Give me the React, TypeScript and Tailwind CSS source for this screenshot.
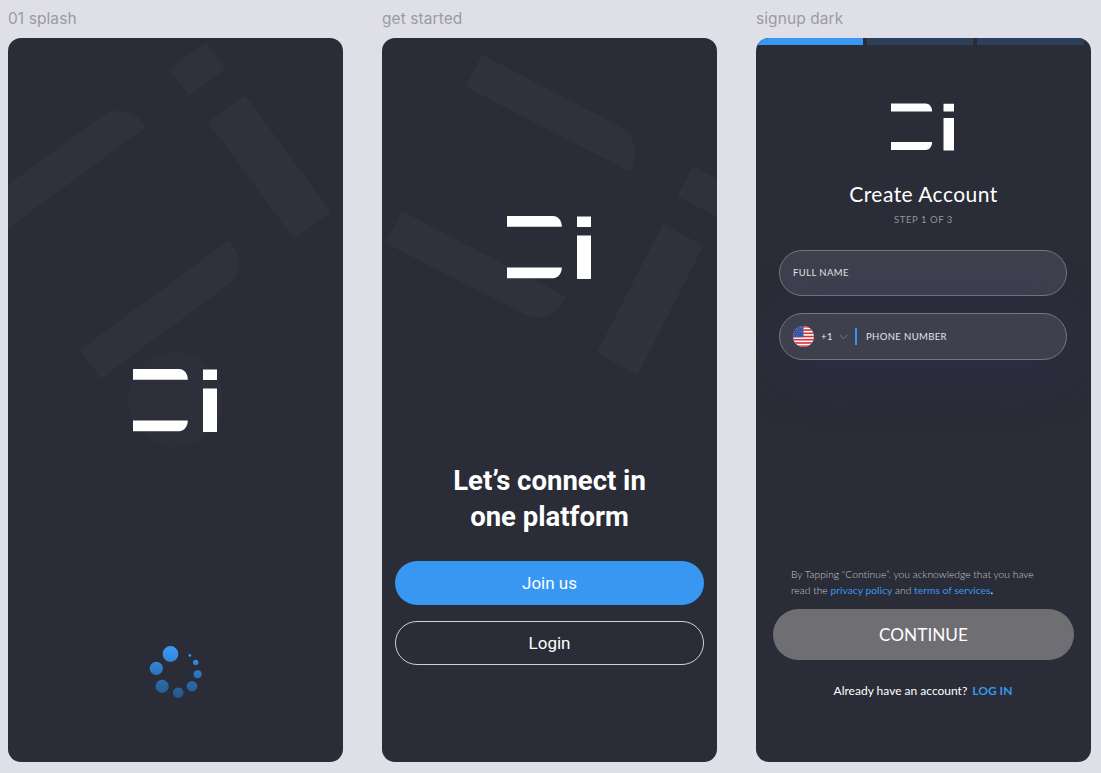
import type { ReactNode } from "react";

function Logo({ className }: { className: string }) {
  return (
    <svg viewBox="0 0 84 63" fill="#fff" className={className} aria-hidden="true">
      <path d="M0 0H46C51 0 54.8 4.5 54.8 10.7H0Z" />
      <path d="M0 51.5H54.8C54.8 57.5 51 62.2 46 62.2H0Z" />
      <path d="M70 .5H84V10.9H70ZM70 19.5H84V62.9H70Z" />
    </svg>
  );
}

function Frame({ title, children }: { title: string; children: ReactNode }) {
  return (
    <section className="flex w-[335px] flex-col">
      <h2 className="h-[38px] pt-[9px] font-['Inter'] text-[15.5px] leading-5 tracking-[0.08px] text-[#9b9b9f]">
        {title}
      </h2>
      <div className="relative flex h-[724px] flex-col items-center overflow-hidden rounded-[13px] bg-[#2a2c37]">
        {children}
      </div>
    </section>
  );
}

function SplashBackdrop() {
  return (
    <svg viewBox="8 38 335 724" className="absolute inset-0 h-full w-full" fill="#2f313c" aria-hidden="true">
      <path d="M206 42L225.7 68.5 189.3 95.7 169 69Z" />
      <path d="M245 95L331 212 294 239 208 122Z" />
      <path d="M8 184.5L101 117C116 106 135 110 146 127L8 228.5Z" />
      <path d="M229 240C243 256 242 274 227 285.5L101 378.7 80 350Z" />
      <circle cx="175.5" cy="399.5" r="47.5" fill="#2d2f3a" />
    </svg>
  );
}

function StartBackdrop() {
  return (
    <svg viewBox="382 38 335 724" className="absolute inset-0 h-full w-full" fill="#2f313c" aria-hidden="true">
      <path d="M482 54.5L622 127.5C636 135 639 156 630.5 172L465.5 87Z" />
      <path d="M692.7 166L717 178.5V216.5L677.5 196.5Z" />
      <path d="M402 211L566 296.5C558 315 541 322 525 314.5L385 243Z" />
      <path d="M663 224L703.5 245.5 637.5 375 596.5 353Z" />
    </svg>
  );
}

function Spinner() {
  return (
    <svg viewBox="149 645 54 54" className="mt-[213px] h-[54px] w-[54px]" aria-hidden="true">
      <defs>
        <linearGradient id="spin" gradientUnits="userSpaceOnUse" x1="0" y1="646" x2="0" y2="698">
          <stop offset="0" stopColor="#3a9af8" />
          <stop offset="1" stopColor="#22568a" />
        </linearGradient>
      </defs>
      <g fill="url(#spin)">
        <circle cx="170.5" cy="654" r="7.9" />
        <circle cx="156.3" cy="668.3" r="6.6" />
        <circle cx="162.1" cy="686.3" r="6.6" />
        <circle cx="178.2" cy="692.7" r="5.3" />
        <circle cx="192" cy="686.3" r="5.3" />
        <circle cx="197.6" cy="674.2" r="4" />
        <circle cx="195.7" cy="662.4" r="2.7" />
        <circle cx="189.9" cy="655.4" r="1.4" />
      </g>
    </svg>
  );
}

function Flag() {
  const stripes = [0, 1, 2, 3, 4, 5, 6];
  const rows = [0, 1, 2, 3, 4];
  return (
    <svg viewBox="0 0 21 21" className="h-[21px] w-[21px]" aria-hidden="true">
      <clipPath id="flag">
        <circle cx="10.5" cy="10.5" r="10.5" />
      </clipPath>
      <g clipPath="url(#flag)">
        <rect width="21" height="21" fill="#fff" />
        {stripes.map((i) => (
          <rect key={i} y={i * 3.23} width="21" height="1.62" fill="#dc3038" />
        ))}
        <rect width="10.5" height="11.3" fill="#3550a0" />
        {rows.map((r) =>
          rows.map((c) => (
            <circle key={`${r}-${c}`} cx={1.2 + c * 2.1 + (r % 2) * 0.9} cy={1.2 + r * 2.2} r=".4" fill="#a9b5da" />
          )),
        )}
      </g>
    </svg>
  );
}

export default function App() {
  return (
    <main className="flex h-[773px] w-[1101px] gap-[39px] overflow-hidden bg-[#dfdfe8] pl-2">
      <Frame title="01 splash">
        <SplashBackdrop />
        <div className="relative flex flex-col items-center pt-[331px]">
          <Logo className="mr-px h-[63px] w-[84px]" />
          <Spinner />
        </div>
      </Frame>

      <Frame title="get started">
        <StartBackdrop />
        <div className="relative flex w-full flex-col items-center px-[13px] pt-[178px] font-['Roboto'] text-white">
          <Logo className="mr-[2px] h-[63px] w-[84px]" />
          <h1 className="mt-[184px] text-center text-[27.5px] leading-9 font-bold">
            Let’s connect in
            <br />
            one platform
          </h1>
          <button className="mt-[26px] h-11 w-full rounded-full bg-[#3897f0] pt-[2px] text-[17px]">Join us</button>
          <button className="mt-4 h-11 w-full rounded-full border border-[#d0d1d4] pt-[2px] text-[17px]">Login</button>
        </div>
      </Frame>

      <Frame title="signup dark">
        <div className="flex h-[7px] w-full gap-1 pr-[7px]">
          <div className="w-[107px] bg-[#3897f0]" />
          <div className="w-[107px] bg-[#2c405c]" />
          <div className="w-[107px] bg-[#2c405c]" />
        </div>
        <div className="flex w-full flex-col items-center font-['Lato'] text-white">
          <Logo className="mt-[58px] mr-[2px] h-[48px] w-[63px]" />
          <h1 className="mt-[29px] text-[21px] leading-[28px] tracking-[0.45px]">Create Account</h1>
          <p className="mt-[5px] text-[9.5px] leading-[14px] tracking-[0.55px] text-[#92939c]">STEP 1 OF 3</p>
          <div className="mt-[23px] mr-px flex h-[46px] w-[288px] items-center rounded-full border border-[#77777b] bg-[#3e404e] pt-px pl-[13px] text-[9.5px] tracking-[0.4px] text-[#e4e4e7]">
            FULL NAME
          </div>
          <div className="mt-[17px] mr-px flex h-[47px] w-[288px] items-center rounded-full border border-[#77777b] bg-[#3e404e] pl-[13px] text-[9.5px] tracking-[0.38px] text-[#e4e4e7] shadow-[0_6px_60px_rgba(49,53,105,0.42)]">
            <Flag />
            <span className="ml-[7px] w-[18px] pt-px">+1</span>
            <svg viewBox="0 0 9 6" className="h-[6px] w-[9px]" fill="none" stroke="#777984" aria-hidden="true">
              <path d="M.7 .8L4.5 4.8 8.3 .8" />
            </svg>
            <span className="mr-[9px] ml-[7px] h-[17px] w-[2px] bg-[#3897f0]" />
            <span className="pt-px">PHONE NUMBER</span>
          </div>
          <p className="mt-[207px] w-[265px] text-[10.3px] leading-[15.5px] font-light text-[#c6c7cc]">
            By Tapping “Continue”. you acknowledge that you have
            <br />
            read the <a className="font-normal text-[#3897f0]">privacy policy</a> and{" "}
            <a className="font-normal text-[#3897f0]">terms of services</a>
            <span className="font-bold text-white">.</span>
          </p>
          <button className="mt-[11px] h-[51px] w-[301px] rounded-full bg-[#6f6e72] pt-px text-[17.2px]">CONTINUE</button>
          <p className="mt-[22px] mr-px text-[12px] leading-[18px]">
            Already have an account? <a className="ml-[2px] font-bold text-[#3897f0]">LOG IN</a>
          </p>
        </div>
      </Frame>
    </main>
  );
}
